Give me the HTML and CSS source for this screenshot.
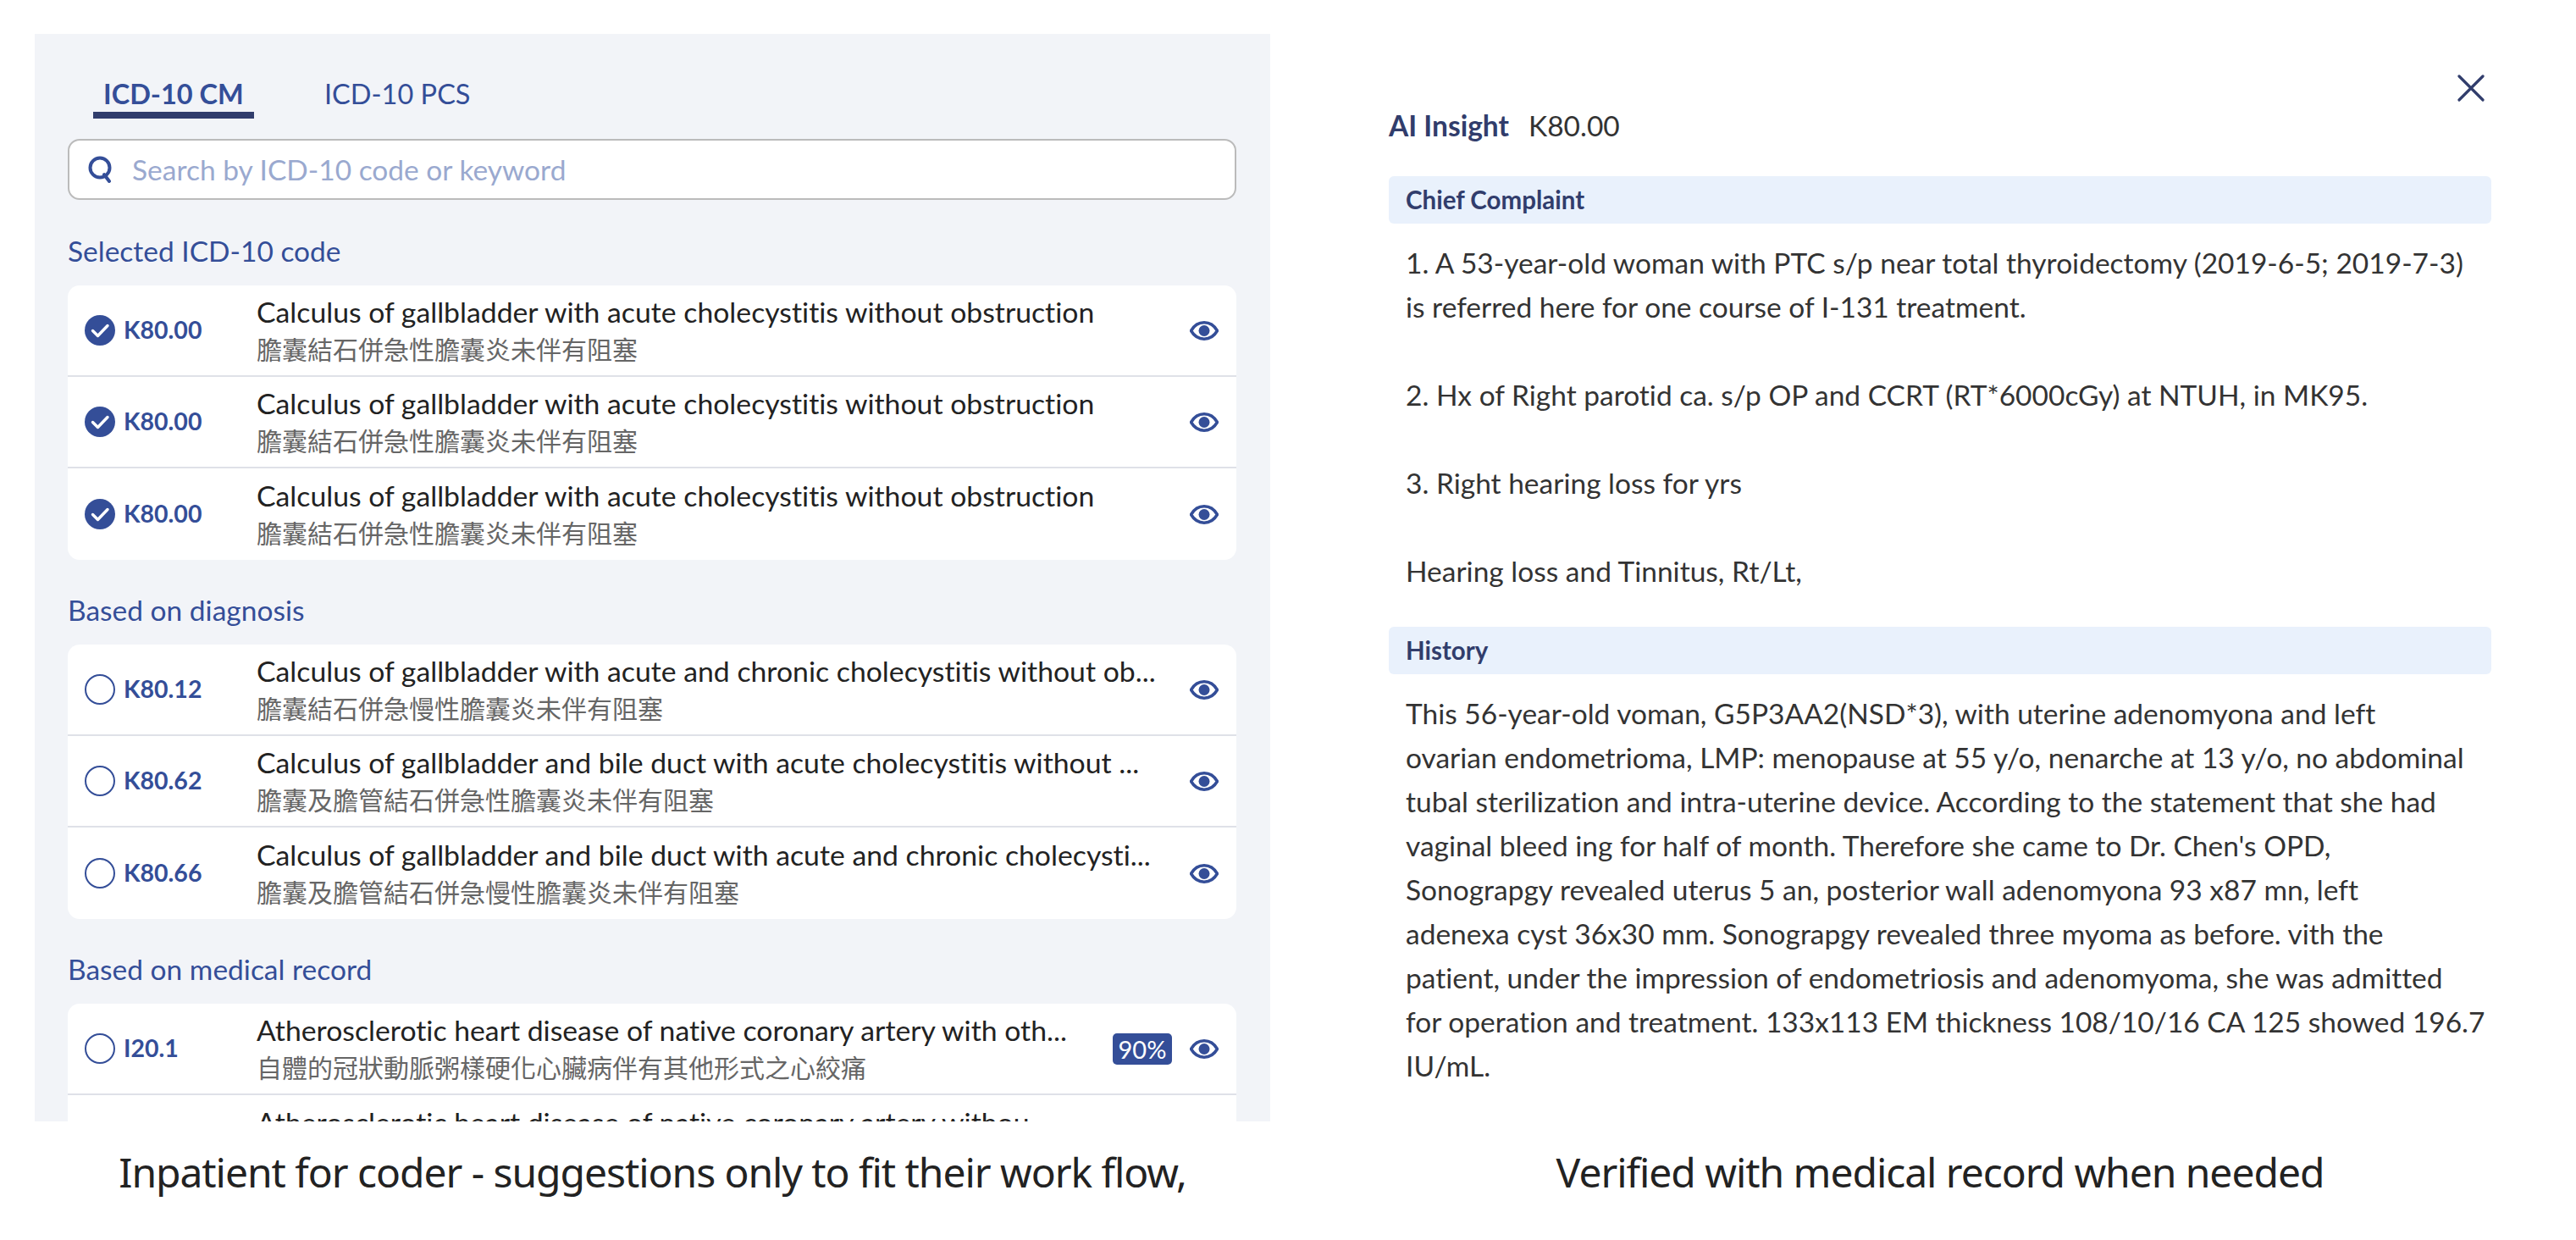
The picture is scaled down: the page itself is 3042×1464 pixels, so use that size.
FILE: index.html
```html
<!DOCTYPE html>
<html lang="en">
<head>
<meta charset="utf-8">
<title>ICD-10</title>
<link rel="stylesheet" href="styles.css">
</head>
<body>
<svg class="defs" width="0" height="0" aria-hidden="true">
  <symbol id="eye" viewBox="0 0 34 23">
    <path d="M1.500 11.500C5.500 4.600 10.800 1.800 17 1.800S28.500 4.600 32.500 11.500C28.500 18.400 23.200 21.200 17 21.200S5.500 18.400 1.500 11.500Z" fill="none" stroke="currentColor" stroke-width="3.600"/>
    <circle cx="17" cy="11.500" r="6.500" fill="currentColor"/>
  </symbol>
  <symbol id="check" viewBox="0 0 36 36">
    <circle cx="18" cy="18" r="18" fill="currentColor"/>
    <path d="M9.500 18.500L15.500 24.500L27 12.500" fill="none" stroke="#fff" stroke-width="3.400" stroke-linecap="round" stroke-linejoin="round"/>
  </symbol>
  <symbol id="radio" viewBox="0 0 36 36">
    <circle cx="18" cy="18" r="17" fill="none" stroke="currentColor" stroke-width="2"/>
  </symbol>
</svg>
<main class="page">
  <section class="col">
    <div class="panel">
      <nav class="tabs">
        <span class="tab active">ICD-10 CM</span>
        <span class="tab">ICD-10 PCS</span>
      </nav>
      <div class="search">
        <svg class="search-icon" viewBox="0 0 30 32"><circle cx="14" cy="14" r="11.500" fill="none" stroke="currentColor" stroke-width="4"/><path d="M19 22L25 30" stroke="currentColor" stroke-width="4" stroke-linecap="round"/></svg>
        <span class="placeholder">Search by ICD-10 code or keyword</span>
      </div>

      <h2 class="section-label">Selected ICD-10 code</h2>
      <div class="card">
        <div class="row"><svg class="mark"><use href="#check"/></svg><b class="code">K80.00</b><div class="desc"><p class="en">Calculus of gallbladder with acute cholecystitis without obstruction</p><p class="zh">膽囊結石併急性膽囊炎未伴有阻塞</p></div><svg class="eye"><use href="#eye"/></svg></div>
        <div class="row"><svg class="mark"><use href="#check"/></svg><b class="code">K80.00</b><div class="desc"><p class="en">Calculus of gallbladder with acute cholecystitis without obstruction</p><p class="zh">膽囊結石併急性膽囊炎未伴有阻塞</p></div><svg class="eye"><use href="#eye"/></svg></div>
        <div class="row"><svg class="mark"><use href="#check"/></svg><b class="code">K80.00</b><div class="desc"><p class="en">Calculus of gallbladder with acute cholecystitis without obstruction</p><p class="zh">膽囊結石併急性膽囊炎未伴有阻塞</p></div><svg class="eye"><use href="#eye"/></svg></div>
      </div>

      <h2 class="section-label">Based on diagnosis</h2>
      <div class="card">
        <div class="row"><svg class="mark"><use href="#radio"/></svg><b class="code">K80.12</b><div class="desc"><p class="en">Calculus of gallbladder with acute and chronic cholecystitis without ob...</p><p class="zh">膽囊結石併急慢性膽囊炎未伴有阻塞</p></div><svg class="eye"><use href="#eye"/></svg></div>
        <div class="row"><svg class="mark"><use href="#radio"/></svg><b class="code">K80.62</b><div class="desc"><p class="en">Calculus of gallbladder and bile duct with acute cholecystitis without ...</p><p class="zh">膽囊及膽管結石併急性膽囊炎未伴有阻塞</p></div><svg class="eye"><use href="#eye"/></svg></div>
        <div class="row"><svg class="mark"><use href="#radio"/></svg><b class="code">K80.66</b><div class="desc"><p class="en">Calculus of gallbladder and bile duct with acute and chronic cholecysti...</p><p class="zh">膽囊及膽管結石併急慢性膽囊炎未伴有阻塞</p></div><svg class="eye"><use href="#eye"/></svg></div>
      </div>

      <h2 class="section-label">Based on medical record</h2>
      <div class="card">
        <div class="row"><svg class="mark"><use href="#radio"/></svg><b class="code">I20.1</b><div class="desc"><p class="en">Atherosclerotic heart disease of native coronary artery with oth...</p><p class="zh">自體的冠狀動脈粥樣硬化心臟病伴有其他形式之心絞痛</p></div><span class="badge">90%</span><svg class="eye"><use href="#eye"/></svg></div>
        <div class="row row-cut"><p class="en">Atherosclerotic heart disease of native coronary artery withou</p></div>
      </div>
    </div>
    <p class="caption">Inpatient for coder - suggestions only to fit their work flow,</p>
  </section>

  <section class="col col-right">
    <div class="insight">
      <div class="close-row"><svg class="close" viewBox="0 0 32 32"><path d="M2 2L30 30M30 2L2 30" stroke="currentColor" stroke-width="3.200" stroke-linecap="round"/></svg></div>
      <h1 class="insight-title"><b>AI Insight</b><span>K80.00</span></h1>
      <h3 class="bar">Chief Complaint</h3>
      <div class="body-text">
        <p>1. A 53-year-old woman with PTC s/p near total thyroidectomy (2019-6-5; 2019-7-3)<br>is referred here for one course of I-131 treatment.</p>
        <p>2. Hx of Right parotid ca. s/p OP and CCRT (RT*6000cGy) at NTUH, in MK95.</p>
        <p>3. Right hearing loss for yrs</p>
        <p>Hearing loss and Tinnitus, Rt/Lt,</p>
      </div>
      <h3 class="bar">History</h3>
      <div class="body-text">
        <p>This 56-year-old voman, G5P3AA2(NSD*3), with uterine adenomyona and left<br>ovarian endometrioma, LMP: menopause at 55 y/o, nenarche at 13 y/o, no abdominal<br>tubal sterilization and intra-uterine device. According to the statement that she had<br>vaginal bleed ing for half of month. Therefore she came to Dr. Chen's OPD,<br>Sonograpgy revealed uterus 5 an, posterior wall adenomyona 93 x87 mn, left<br>adenexa cyst 36x30 mm. Sonograpgy revealed three myoma as before. vith the<br>patient, under the impression of endometriosis and adenomyoma, she was admitted<br>for operation and treatment. 133x113 EM thickness 108/10/16 CA 125 showed 196.7<br>IU/mL.</p>
      </div>
    </div>
    <p class="caption">Verified with medical record when needed</p>
  </section>
</main>
</body>
</html>
```
FILE: styles.css
```css
* { box-sizing: border-box; }
html, body { margin: 0; padding: 0; background: #fff; }
body { width: 3042px; height: 1464px; overflow: hidden; font-family: "Lato", "Noto Sans CJK TC", sans-serif; font-variant-ligatures: none; }
.defs { position: absolute; }
p, h1, h2, h3 { margin: 0; font-weight: 400; }

.page { display: grid; grid-template-columns: 1459px 1302px; column-gap: 140px; padding: 40px 0 0 41px; }
.col { display: flex; flex-direction: column; }

.panel { height: 1284px; overflow: hidden; background: #f2f4f8; padding: 0 40px 0 39px; }
.tabs { display: flex; height: 100px; padding: 46px 0 0 30px; gap: 60px; }
.tab { width: 190px; padding: 0 12px; height: 54px; font-size: 32.500px; line-height: 50px; color: #344e98; white-space: nowrap; }
.tab.active { font-weight: 700; border-bottom: 8px solid #313d6c; }
.tab + .tab { margin-left: 11px; }

.search { display: flex; align-items: center; height: 72px; margin-top: 24px; padding-left: 22px; gap: 22px; background: #fff; border: 2px solid #bbb; border-radius: 14px; }
.search-icon { width: 30px; height: 32px; color: #344e98; }
.placeholder { font-size: 33.500px; color: #9aa9cf; }

.section-label { height: 40px; font-size: 33.500px; line-height: 40px; color: #344e98; margin: 40px 0 21px; }
.card + .section-label { margin-top: 39px; }

.card { background: #fff; border-radius: 14px; overflow: hidden; }
.row { display: flex; align-items: center; height: 108px; padding: 0 21px 0 20px; border-bottom: 2px solid #dfe1e8; }
.row:last-child { border-bottom: 0; }
.row-cut { align-items: flex-start; padding: 12px 21px 0 223px; }
.mark { flex: none; width: 36px; height: 36px; color: #344e98; }
.code { flex: none; width: 111px; margin: 0 0 2px 10px; font-size: 28.500px; font-weight: 700; color: #344e98; }
.desc { flex: 1; min-width: 0; margin-left: 46px; }
.en { font-size: 33.750px; line-height: 40px; color: #222; white-space: nowrap; }
.zh { margin-top: 2px; font-size: 30px; line-height: 42px; color: #666; white-space: nowrap; font-family: "Noto Sans CJK TC", sans-serif; }
.eye { flex: none; width: 34px; height: 23px; color: #344e98; }
.badge { flex: none; margin-right: 21px; width: 70px; height: 37px; border-radius: 5px; background: #344e98; color: #fff; text-align: center; font-size: 29px; line-height: 37px; }

.caption { text-align: center; margin-top: 35px; font-family: "Noto Sans", sans-serif; font-size: 48px; line-height: 50px; letter-spacing: -1.050px; color: #222; }

.insight { height: 1284px; }
.close-row { display: flex; justify-content: flex-end; padding: 48px 8px 0 0; height: 79px; }
.close { width: 32px; height: 32px; color: #313d6c; }
.insight-title { display: flex; gap: 23px; font-size: 33.500px; line-height: 42px; margin: 8px 0 39px; color: #333; }
.insight-title b { color: #313d6c; font-weight: 700; }
.bar { height: 56px; line-height: 56px; padding-left: 20px; font-size: 29.500px; font-weight: 700; color: #313d6c; background: #e9f1fc; border-radius: 6px; }
.body-text { padding: 20px 20px 40px; font-size: 33.500px; line-height: 52px; color: #333; white-space: nowrap; }
.body-text p + p { margin-top: 52px; }
```
